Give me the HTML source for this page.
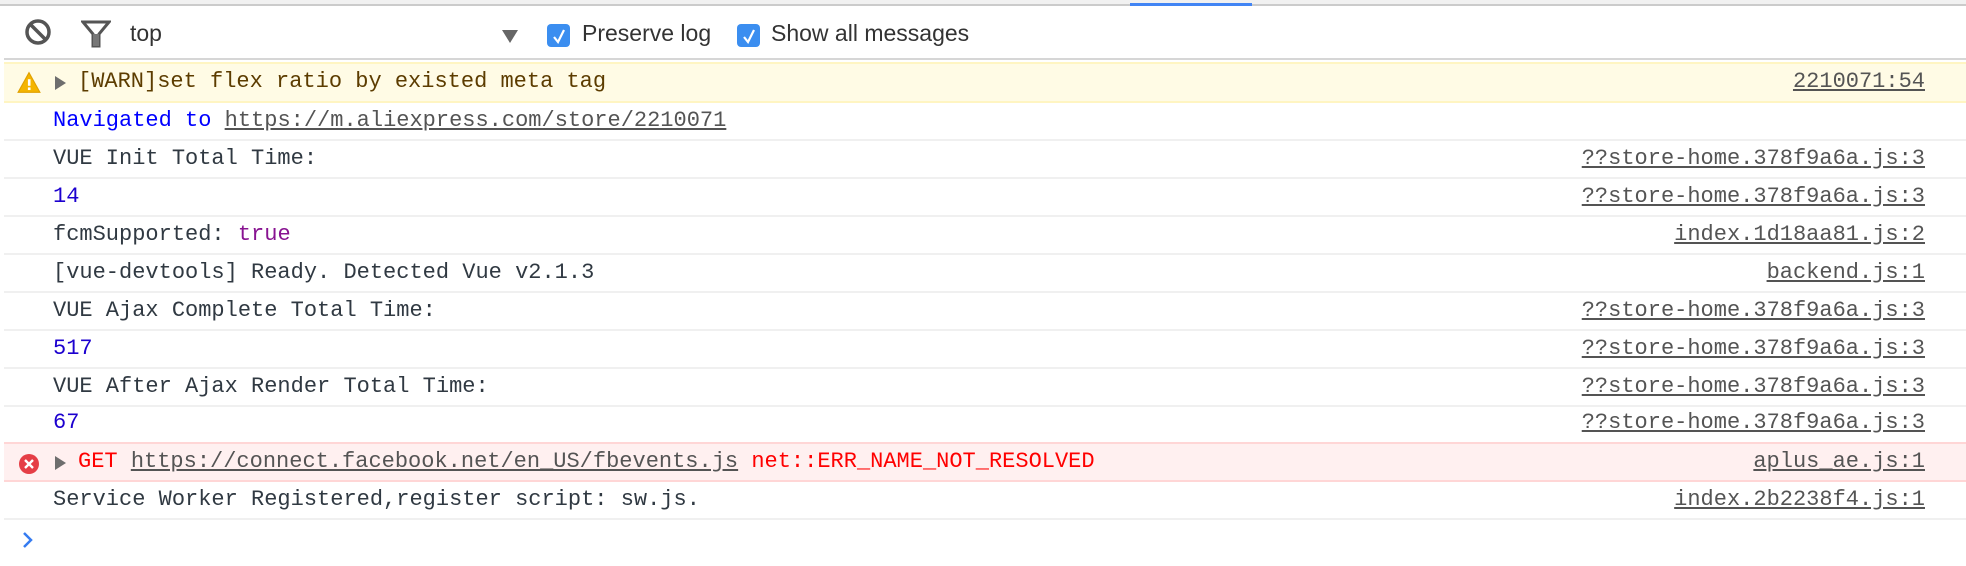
<!DOCTYPE html>
<html><head><meta charset="utf-8"><style>
*{margin:0;padding:0;box-sizing:border-box}
body{width:1966px;height:566px;background:#fff;position:relative;overflow:hidden;font-family:"Liberation Mono",monospace;font-size:22px}
.top{position:absolute;left:0;top:0;width:1966px;height:4px;background:#f1f1f1}
.tl{position:absolute;left:0;top:4px;width:1966px;height:2px;background:#cbcbcb}
.tab{position:absolute;left:1130px;top:3px;width:122px;height:3px;background:#4285f4}
.vl{position:absolute;left:2px;top:6px;width:2px;height:560px;background:#bdbdbd}
.tb{position:absolute;left:4px;top:6px;width:1962px;height:53px;font-family:"Liberation Sans",sans-serif;font-size:23px;color:#333}
.tbb{position:absolute;left:4px;top:58px;width:1962px;height:2px;background:#d6d6d6}
.row{position:absolute;left:4px;width:1962px;height:38px;border-bottom:2px solid #f0f0f0;color:#303942;line-height:36px;white-space:pre}
.row .t{position:absolute;left:49px;top:0}
.row .s{position:absolute;right:41px;top:0;color:#545454;text-decoration:underline}
.warn{background:#fffbe5;border-top:2px solid #fff5c2;border-bottom:2px solid #fff5c2;color:#5c3c00}
.err{background:#fff0f0;border-top:2px solid #ffd6d6;border-bottom:2px solid #ffd6d6;color:#f00}
.tri{position:absolute;left:51px;top:12px;width:0;height:0;border-left:11px solid #6e6e6e;border-top:7px solid transparent;border-bottom:7px solid transparent}
u{color:#545454}
.cb{position:absolute;top:18px;width:23px;height:23px;background:#3b8ef0;border-radius:4px}
</style></head><body>
<div class="top"></div><div class="tl"></div><div class="tab"></div>
<div class="tb">
<svg style="position:absolute;left:20px;top:12px" width="28" height="28" viewBox="0 0 28 28"><circle cx="14" cy="14" r="11" fill="none" stroke="#555" stroke-width="3.5"/><line x1="6.5" y1="6.5" x2="21.5" y2="21.5" stroke="#555" stroke-width="3.5"/></svg>
<svg style="position:absolute;left:77px;top:13px" width="30" height="30" viewBox="0 0 30 30"><path d="M2 3 H28 L18 15 V27 H12 V15 Z" fill="#fff" stroke="#555" stroke-width="3"/><path d="M12 15 V27 H18 V15Z" fill="#777"/></svg>
<span style="position:absolute;left:126px;top:14px">top</span>
<svg style="position:absolute;left:498px;top:24px" width="16" height="14"><path d="M0 0 H16 L8 13Z" fill="#666"/></svg>
<div class="cb" style="left:543px"></div><svg style="position:absolute;left:548px;top:22px" width="14" height="16"><path d="M2 9 L6 14 L12 2" fill="none" stroke="#fff" stroke-width="2.2"/></svg>
<span style="position:absolute;left:578px;top:14px">Preserve log</span>
<div class="cb" style="left:733px"></div><svg style="position:absolute;left:738px;top:22px" width="14" height="16"><path d="M2 9 L6 14 L12 2" fill="none" stroke="#fff" stroke-width="2.2"/></svg>
<span style="position:absolute;left:767px;top:14px">Show all messages</span>
</div>
<div class="tbb"></div>
<div class="row warn" style="top:62px;height:41px"><svg style="position:absolute;left:13px;top:7px" width="24" height="23" viewBox="0 0 22 20"><path d="M11 1 L21 19 H1Z" fill="#f4b400" stroke="#e0a000" stroke-width="1"/><rect x="10" y="7" width="2.4" height="6" fill="#fff"/><rect x="10" y="14.5" width="2.4" height="2.4" fill="#fff"/></svg><div class="tri"></div><span class="t" style="left:74px">[WARN]set flex ratio by existed meta tag</span><span class="s">2210071:54</span></div>
<div class="row" style="top:103px"><span class="t" style="color:#0000ff">Navigated to <u>https://m.aliexpress.com/store/2210071</u></span></div>
<div class="row" style="top:141px"><span class="t">VUE Init Total Time:</span><span class="s">??store-home.378f9a6a.js:3</span></div>
<div class="row" style="top:179px"><span class="t" style="color:#1c00cf">14</span><span class="s">??store-home.378f9a6a.js:3</span></div>
<div class="row" style="top:217px"><span class="t">fcmSupported: <span style="color:#881391">true</span></span><span class="s">index.1d18aa81.js:2</span></div>
<div class="row" style="top:255px"><span class="t">[vue-devtools] Ready. Detected Vue v2.1.3</span><span class="s">backend.js:1</span></div>
<div class="row" style="top:293px"><span class="t">VUE Ajax Complete Total Time:</span><span class="s">??store-home.378f9a6a.js:3</span></div>
<div class="row" style="top:331px"><span class="t" style="color:#1c00cf">517</span><span class="s">??store-home.378f9a6a.js:3</span></div>
<div class="row" style="top:369px"><span class="t">VUE After Ajax Render Total Time:</span><span class="s">??store-home.378f9a6a.js:3</span></div>
<div class="row" style="top:407px;height:35px;border-bottom:none"><span class="t" style="color:#1c00cf;top:-2px">67</span><span class="s" style="top:-2px">??store-home.378f9a6a.js:3</span></div>
<div class="row err" style="top:442px;height:40px"><svg style="position:absolute;left:14px;top:9px" width="22" height="22"><circle cx="11" cy="11" r="10" fill="#e53e46"/><path d="M7 7 L15 15 M15 7 L7 15" stroke="#fff" stroke-width="2.4"/></svg><div class="tri"></div><span class="t" style="left:74px">GET <u>https://connect.facebook.net/en_US/fbevents.js</u> net::ERR_NAME_NOT_RESOLVED</span><span class="s">aplus_ae.js:1</span></div>
<div class="row" style="top:482px"><span class="t">Service Worker Registered,register script: sw.js.</span><span class="s">index.2b2238f4.js:1</span></div>
<svg style="position:absolute;left:22px;top:531px" width="12" height="18"><path d="M2 2 L9 9 L2 16" fill="none" stroke="#367cf1" stroke-width="2.5"/></svg>
</body></html>
